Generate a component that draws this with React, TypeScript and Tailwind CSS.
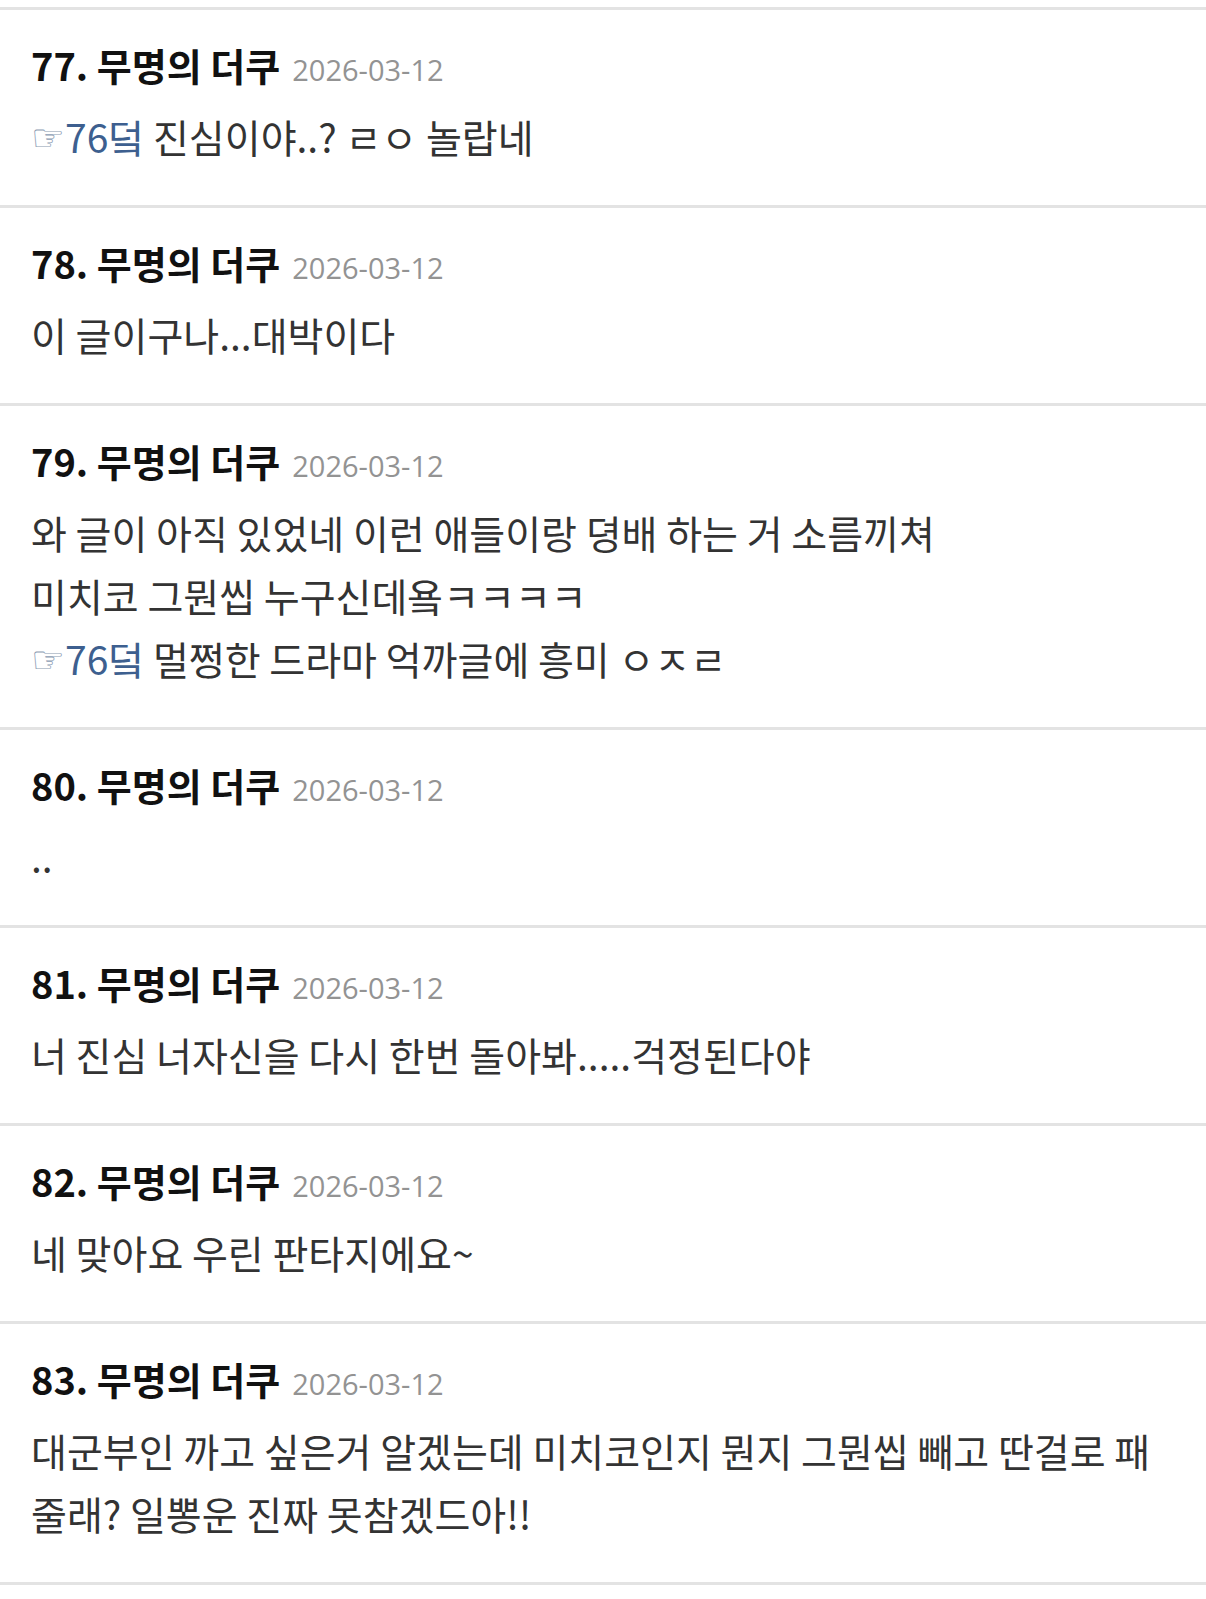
import React from "react";

type Part = { ref?: string; text: string };

type Comment = {
  no: number;
  date: string;
  lines: Part[][];
};

const comments: Comment[] = [
  { no: 77, date: "2026-03-12", lines: [[{ ref: "76덬", text: " 진심이야..? ㄹㅇ 놀랍네" }]] },
  { no: 78, date: "2026-03-12", lines: [[{ text: "이 글이구나...대박이다" }]] },
  {
    no: 79,
    date: "2026-03-12",
    lines: [
      [{ text: "와 글이 아직 있었네 이런 애들이랑 뎡배 하는 거 소름끼쳐" }],
      [{ text: "미치코 그뭔씹 누구신데욬ㅋㅋㅋㅋ" }],
      [{ ref: "76덬", text: " 멀쩡한 드라마 억까글에 흥미 ㅇㅈㄹ" }],
    ],
  },
  { no: 80, date: "2026-03-12", lines: [[{ text: ".." }]] },
  { no: 81, date: "2026-03-12", lines: [[{ text: "너 진심 너자신을 다시 한번 돌아봐.....걱정된다야" }]] },
  { no: 82, date: "2026-03-12", lines: [[{ text: "네 맞아요 우린 판타지에요~" }]] },
  {
    no: 83,
    date: "2026-03-12",
    lines: [
      [{ text: "대군부인 까고 싶은거 알겠는데 미치코인지 뭔지 그뭔씹 빼고 딴걸로 패" }],
      [{ text: "줄래? 일뽕운 진짜 못참겠드아!!" }],
    ],
  },
];

const kr = "font-['Noto_Sans_CJK_KR',sans-serif]";

function CommentItem({ c }: { c: Comment }) {
  return (
    <li className="border-b-[3px] border-[#e3e3e3] px-[31px] pt-[30px] pb-[37px]">
      {/* header */}
      <div className="flex items-baseline h-[50px]">
        <span className={`${kr} text-[38px] leading-[50px] font-bold text-[#111]`}>
          {c.no}. 무명의 더쿠
        </span>
        <span className="ml-[12px] font-['Open_Sans',sans-serif] text-[29px] leading-[50px] text-[#939393]">
          {c.date}
        </span>
      </div>

      {/* body */}
      <div className={`${kr} mt-[15px] text-[39px] leading-[63px] text-[#333]`}>
        {c.lines.map((line, i) => (
          <div key={i} className="whitespace-pre h-[63px]">
            {line.map((p, j) => (
              <React.Fragment key={j}>
                {p.ref && (
                  <span className="text-[#3d5f8f]">
                    <span className="font-['DejaVu_Sans',sans-serif] text-[38px] leading-none text-[#8a9bb3] align-[2px]">☞</span>
                    {p.ref}
                  </span>
                )}
                {p.text}
              </React.Fragment>
            ))}
          </div>
        ))}
      </div>
    </li>
  );
}

export default function App() {
  return (
    <div className="min-h-screen bg-white pt-[7px]">
      <ul className="border-t-[3px] border-[#e3e3e3]">
        {comments.map((c) => (
          <CommentItem key={c.no} c={c} />
        ))}
      </ul>
    </div>
  );
}
